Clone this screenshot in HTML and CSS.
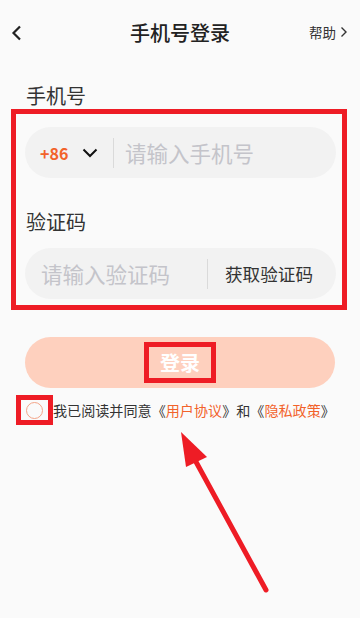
FILE: index.html
```html
<!DOCTYPE html>
<html lang="zh-CN">
<head>
    <meta charset="UTF-8">
    <meta name="viewport" content="width=device-width, initial-scale=1.0">
    <title>手机号登录</title>
    <link rel="stylesheet" href="styles.css">
</head>
<body>
    <div class="page">
        <!-- 顶部栏 -->
        <div class="header">
            <svg class="back" width="12" height="16" viewBox="0 0 12 16">
                <path d="M9 1.5 L2.5 8 L9 14.5" fill="none" stroke="#222" stroke-width="2.2"/>
            </svg>
            <div class="title">手机号登录</div>
            <div class="help">帮助
                <svg width="8" height="12" viewBox="0 0 8 12">
                    <path d="M1.5 1.5 L6 6 L1.5 10.5" fill="none" stroke="#333" stroke-width="1.4"/>
                </svg>
            </div>
        </div>

        <div class="label first">手机号</div>

        <div class="mark-box">
            <div class="field">
                <span class="code">+86</span>
                <svg class="caret" width="16" height="10" viewBox="0 0 16 10">
                    <path d="M1.5 1.5 L8 8 L14.5 1.5" fill="none" stroke="#111" stroke-width="2"/>
                </svg>
                <span class="sep"></span>
                <span class="placeholder">请输入手机号</span>
            </div>

            <div class="label">验证码</div>

            <div class="field sms">
                <span class="placeholder">请输入验证码</span>
                <span class="sep"></span>
                <span class="get-code">获取验证码</span>
            </div>
        </div>

        <button class="login"><span class="login-text">登录</span></button>

        <div class="agree">
            <span class="check-mark"><span class="circle"></span></span>
            <span class="agree-text">我已阅读并同意《<a>用户协议</a>》和《<a>隐私政策</a>》</span>
        </div>

        <!-- 标注箭头 -->
        <svg class="arrow" width="360" height="618" viewBox="0 0 360 618">
            <line x1="266" y1="590" x2="195" y2="460" stroke="#ee1c25" stroke-width="5" stroke-linecap="round"/>
            <polygon points="181,432 186,467 207,457" fill="#ee1c25"/>
        </svg>
    </div>
</body>
</html>
```

FILE: styles.css
```css
/* 通用 */
body {
    margin: 0;
    background: #fafafa;
    font-family: "Noto Sans CJK SC", "Noto Sans", sans-serif;
    color: #333;
}

.page {
    position: relative;
    width: 360px;
    height: 618px;
    overflow: hidden;
}

.header {
    height: 64px;
    display: flex;
    align-items: center;
    justify-content: center;
    position: relative;
}

.back {
    position: absolute;
    left: 11px;
    top: 25px;
}

.title {
    font-size: 20px;
    font-weight: 500;
    color: #222;
}

.help {
    position: absolute;
    right: 12px;
    top: 22px;
    font-size: 13.5px;
    color: #333;
    display: flex;
    align-items: center;
    gap: 4px;
}

.label {
    font-size: 20px;
    line-height: 24px;
    color: #333;
    padding-left: 26px;
}

.label.first {
    margin-top: 20px;
}

.mark-box {
    margin: 1px 13px 0 11px;
    border: 5px solid #ee1c25;
    padding: 13px 6px 6px 9px;
}

.mark-box .label {
    padding-left: 1px;
    margin-top: 32px;
    margin-bottom: 14px;
}

.field {
    height: 51px;
    border-radius: 26px;
    background: #f2f2f2;
    display: flex;
    align-items: center;
    padding-left: 15px;
}

.code {
    color: #f2622a;
    font-weight: 700;
    font-size: 16px;
    width: 42px;
}

.caret {
    margin-right: 15px;
}

.sep {
    width: 1px;
    height: 30px;
    background: #dadada;
}

.placeholder {
    font-size: 21.5px;
    color: #c4c4ca;
    margin-left: 11px;
}

.sms .placeholder {
    margin-left: 1px;
    width: 166px;
}

.get-code {
    margin-left: 17px;
    font-size: 17.6px;
    color: #333;
}

.login {
    display: flex;
    align-items: center;
    justify-content: center;
    margin: 27px 0 0 25px;
    width: 310px;
    height: 51px;
    border: none;
    border-radius: 26px;
    background: #fed0be;
    padding: 0;
    font-family: inherit;
}

.login-text {
    border: 5px solid #ee1c25;
    padding: 0 11px;
    height: 31px;
    line-height: 31px;
    color: #fff;
    font-size: 20px;
    font-weight: 700;
}

.agree {
    display: flex;
    align-items: center;
    margin: 7px 0 0 16px;
}

.check-mark {
    width: 27px;
    height: 20px;
    border: 5px solid #ee1c25;
    display: flex;
    align-items: center;
    justify-content: center;
    background: #fafafa;
}

.circle {
    width: 15px;
    height: 15px;
    border: 1px solid #f3a488;
    border-radius: 50%;
}

.agree-text {
    font-size: 14.1px;
    color: #333;
    white-space: nowrap;
}

.agree-text a {
    color: #f2622a;
}

.arrow {
    position: absolute;
    left: 0;
    top: 0;
    pointer-events: none;
}
```
